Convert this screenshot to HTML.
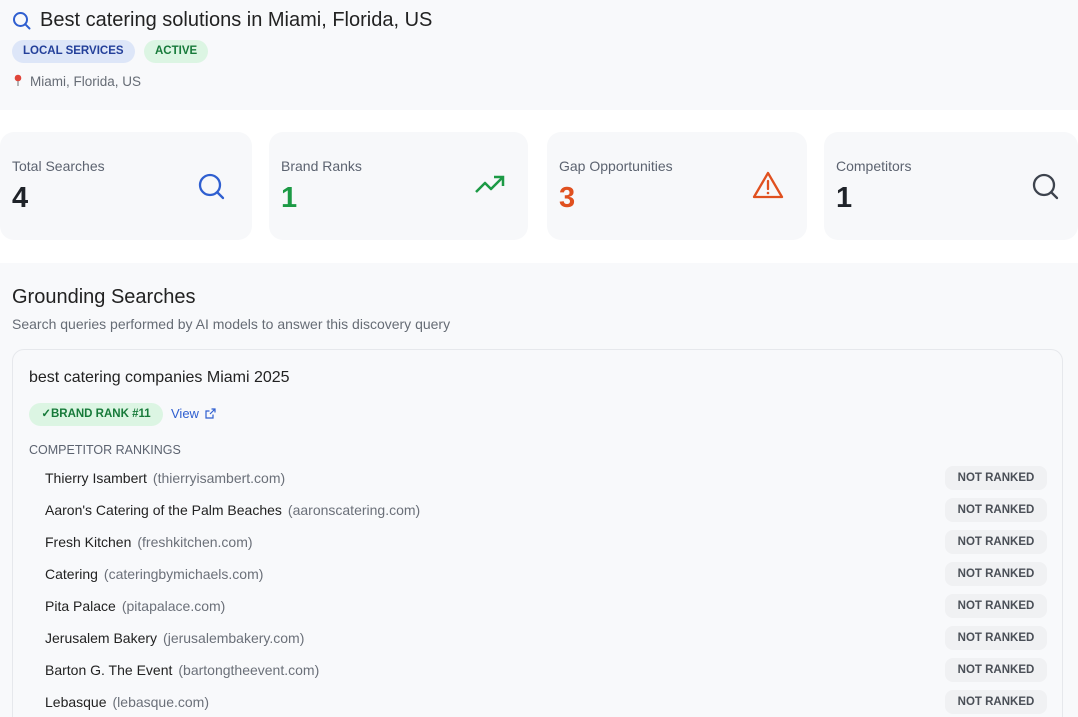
<!DOCTYPE html>
<html><head><meta charset="utf-8"><style>
*{box-sizing:border-box;margin:0;padding:0}
html,body{width:1078px;height:717px;overflow:hidden}
body{background:#fff;font-family:"Liberation Sans",sans-serif;color:#1f2329;position:relative}
.hdr{position:absolute;left:0;top:0;width:1078px;height:110px;background:#f8f9fb}
.title{position:absolute;left:40px;top:9px;font-size:20px;font-weight:500;color:#222}
.pill{position:absolute;top:40px;height:23px;border-radius:12px;font-size:11.5px;font-weight:700;line-height:23px;padding:0 11px}
.loc{position:absolute;left:30px;top:74px;font-size:13.5px;color:#666c75}
.card{position:absolute;top:132px;height:108px;background:#f7f8fa;border-radius:14px}
.card .l{position:absolute;left:12px;top:26px;font-size:14px;color:#5c6370}
.card .n{position:absolute;left:12px;top:50px;font-size:29px;font-weight:700}
.card svg{position:absolute;top:40px}
.sec{position:absolute;left:0;top:263px;width:1078px;height:454px;background:#f8f9fb}
.box{position:absolute;left:12px;top:349px;width:1051px;height:400px;border:1px solid #e6e8ec;border-radius:12px;background:#f8f9fb}
.row{position:absolute;left:45px;font-size:14px;color:#222}
.row span{color:#6b7079;margin-left:6px}
.nr{position:absolute;left:945px;width:102px;height:24px;border-radius:8px;background:#f0f1f3;font-size:11.5px;font-weight:700;color:#4a4f57;line-height:24px;text-align:center}
</style></head><body>
<div class="hdr">
<svg style="position:absolute;left:12px;top:11px" width="20" height="20" viewBox="0 0 20 20"><circle cx="8.5" cy="8.5" r="6.5" fill="none" stroke="#2f5fd0" stroke-width="2"/><line x1="13.2" y1="13.2" x2="17.5" y2="17.5" stroke="#2f5fd0" stroke-width="2" stroke-linecap="round"/></svg>
<div class="title">Best catering solutions in Miami, Florida, US</div>
<div class="pill" style="left:12px;background:#dde6f8;color:#24409a">LOCAL SERVICES</div>
<div class="pill" style="left:144px;background:#dcf5e3;color:#177a3a">ACTIVE</div>
<svg style="position:absolute;left:14px;top:74px" width="8" height="13" viewBox="0 0 8 13"><circle cx="4" cy="4" r="3.3" fill="#e0453a"/><line x1="4" y1="7" x2="4" y2="12" stroke="#888" stroke-width="1.2"/></svg>
<div class="loc">Miami, Florida, US</div>
</div>

<div class="card" style="left:0;width:252px"><div class="l">Total Searches</div><div class="n">4</div>
<svg style="left:197px" width="30" height="30" viewBox="0 0 30 30"><circle cx="13" cy="13" r="10" fill="none" stroke="#2f5fd0" stroke-width="2.3"/><line x1="20.5" y1="20.5" x2="26" y2="26" stroke="#2f5fd0" stroke-width="2.3" stroke-linecap="round"/></svg></div>
<div class="card" style="left:269px;width:259px"><div class="l">Brand Ranks</div><div class="n" style="color:#1c9a45">1</div>
<svg style="left:205px;top:42px" width="32" height="22" viewBox="0 0 32 22"><polyline points="2,18 11,9 17,15 29,3" fill="none" stroke="#1c9a45" stroke-width="2.5" stroke-linejoin="round"/><polyline points="20,3 29,3 29,12" fill="none" stroke="#1c9a45" stroke-width="2.5"/></svg></div>
<div class="card" style="left:547px;width:260px"><div class="l">Gap Opportunities</div><div class="n" style="color:#e0501f">3</div>
<svg style="left:204px;top:38px" width="34" height="30" viewBox="0 0 34 30"><path d="M17 3 L31 27 H3 Z" fill="none" stroke="#e0501f" stroke-width="2.3" stroke-linejoin="round"/><line x1="17" y1="11" x2="17" y2="19" stroke="#e0501f" stroke-width="2.3" stroke-linecap="round"/><circle cx="17" cy="23" r="1.3" fill="#e0501f"/></svg></div>
<div class="card" style="left:824px;width:254px"><div class="l">Competitors</div><div class="n">1</div>
<svg style="left:207px" width="30" height="30" viewBox="0 0 30 30"><circle cx="13" cy="13" r="10" fill="none" stroke="#3d434d" stroke-width="2.3"/><line x1="20.5" y1="20.5" x2="26" y2="26" stroke="#3d434d" stroke-width="2.3" stroke-linecap="round"/></svg></div>

<div class="sec"></div>
<div style="position:absolute;left:12px;top:286px;font-size:20px;font-weight:500;color:#222">Grounding Searches</div>
<div style="position:absolute;left:12px;top:316px;font-size:14px;color:#666c75">Search queries performed by AI models to answer this discovery query</div>
<div class="box"></div>
<div style="position:absolute;left:29px;top:369px;font-size:16px;font-weight:500;color:#222">best catering companies Miami 2025</div>
<div style="position:absolute;left:29px;top:403px;height:23px;width:134px;border-radius:12px;background:#dcf5e3;color:#177a3a;font-size:11.5px;font-weight:700;line-height:23px;text-align:center">✓BRAND RANK #11</div>
<div style="position:absolute;left:171px;top:406px;font-size:13px;color:#2f5fd0">View
<svg width="11" height="11" viewBox="0 0 11 11" style="vertical-align:-1px;margin-left:2px"><path d="M8 6.5V10H1V3H4.5M6.5 1H10V4.5M10 1L5 6" fill="none" stroke="#2f5fd0" stroke-width="1.2"/></svg></div>
<div style="position:absolute;left:29px;top:443px;font-size:12.5px;color:#5c6370">COMPETITOR RANKINGS</div>

<div class="row" style="top:470px">Thierry Isambert<span>(thierryisambert.com)</span></div><div class="nr" style="top:466px">NOT RANKED</div>
<div class="row" style="top:502px">Aaron's Catering of the Palm Beaches<span>(aaronscatering.com)</span></div><div class="nr" style="top:498px">NOT RANKED</div>
<div class="row" style="top:534px">Fresh Kitchen<span>(freshkitchen.com)</span></div><div class="nr" style="top:530px">NOT RANKED</div>
<div class="row" style="top:566px">Catering<span>(cateringbymichaels.com)</span></div><div class="nr" style="top:562px">NOT RANKED</div>
<div class="row" style="top:598px">Pita Palace<span>(pitapalace.com)</span></div><div class="nr" style="top:594px">NOT RANKED</div>
<div class="row" style="top:630px">Jerusalem Bakery<span>(jerusalembakery.com)</span></div><div class="nr" style="top:626px">NOT RANKED</div>
<div class="row" style="top:662px">Barton G. The Event<span>(bartongtheevent.com)</span></div><div class="nr" style="top:658px">NOT RANKED</div>
<div class="row" style="top:694px">Lebasque<span>(lebasque.com)</span></div><div class="nr" style="top:690px">NOT RANKED</div>
</body></html>
